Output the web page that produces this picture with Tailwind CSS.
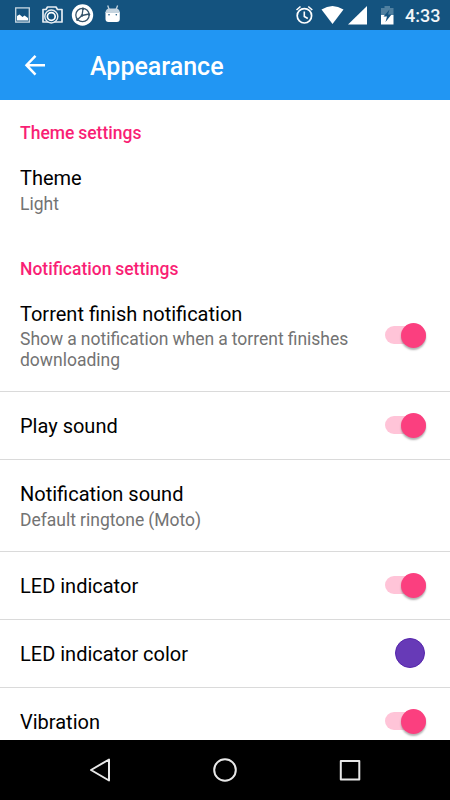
<!DOCTYPE html>
<html lang="en">
<head>
<meta charset="utf-8">
<title>Appearance</title>
<script src="https://cdn.jsdelivr.net/npm/@tailwindcss/browser@4"></script>
</head>
<body class="w-[450px] h-[800px] overflow-hidden bg-white flex flex-col font-['Roboto',sans-serif]">
<div class="h-[30px] shrink-0 bg-[#14537f] flex items-center">
  <svg class="w-[125px] h-[30px]" viewBox="0 0 125 30" fill="none">
    <rect x="15.700" y="7.900" width="13.600" height="14.200" stroke="#c9d9e3" stroke-width="1.300"/>
    <path d="M17 20.500v-4.500l2.500-1.500 3 2.500 2-1.500 3.500 2.500v2.500z" fill="#fff"/>
    <path d="M43 9.500h3l1.500-2.500h8.500l1.500 2.500h4.500v12.500h-19z" stroke="#e6edf3" stroke-width="1.700" stroke-linejoin="round"/>
    <circle cx="51.300" cy="16.500" r="6.500" fill="#14537f" stroke="#e6edf3" stroke-width="1.400"/>
    <circle cx="51.300" cy="16.500" r="3.900" stroke="#fff" stroke-width="1.700"/>
    <circle cx="82.500" cy="15" r="10.700" fill="#fff"/>
    <circle cx="82.500" cy="15" r="6.700" stroke="#35546b" stroke-width="1.300"/>
    <path d="M82 15.500l1-6.500M82 15.500l7-1.500M82 15.500l-5 4.500" stroke="#35546b" stroke-width="1.300"/>
    <circle cx="82" cy="15.500" r="1.300" fill="#35546b"/><circle cx="83" cy="8.800" r="1.200" fill="#35546b"/><circle cx="89" cy="14.500" r="1.200" fill="#35546b"/><circle cx="77.300" cy="19.800" r="1.200" fill="#35546b"/>
    <path d="M105.500 12h14.300v7q0 3-3 3h-8.300q-3 0-3-3z" fill="#fff"/>
    <path d="M105.500 13q0-4.500 4-4.500h6.300q4 0 4 4.500z" fill="#c5d4df"/>
    <path d="M107.700 5.500l1.500 4M117.600 5.500l-1.500 4" stroke="#c5d4df" stroke-width="1.300"/>
    <circle cx="109" cy="14.800" r=".8" fill="#14537f"/><circle cx="116.300" cy="14.800" r=".8" fill="#14537f"/>
  </svg>
  <svg class="w-[115px] h-[30px] ml-auto" viewBox="290 0 115 30" fill="none">
    <circle cx="304.400" cy="15.800" r="7.200" stroke="#fff" stroke-width="1.700"/>
    <path d="M304.300 11.500v5l3.500 2M296.500 10l4-3.500M312.300 10l-4-3.500" stroke="#fff" stroke-width="1.600"/>
    <path d="M321.500 9.500q11-7 22 0L332.500 24z" fill="#fff"/>
    <path d="M348 24.500L367 6v18.500z" fill="#fff"/>
    <path d="M381 8h3.500v-2h5.500v2h3.500v7h-12.500z" fill="#5080a0"/>
    <path d="M381 15h12.500v9.500h-12.500z" fill="#fff"/>
    <path d="M389.500 9.500l-6 7h3.500l-1.500 5.500 6-7.500h-3.500z" fill="#14537f"/>
  </svg>
  <div class="w-[45px] mt-0.5 text-[18px] leading-[22px] font-medium text-[#f1f5f8]">4:33</div>
</div>
<header class="h-[70px] shrink-0 bg-[#2196f3] flex items-center">
  <svg class="w-[90px] h-[70px]" viewBox="0 0 90 70" fill="none" stroke="#fff" stroke-width="2.500"><path d="M45 35.200H27M35.500 25.800l-9 9.400 9 9.400"/></svg>
  <h1 class="text-[25px] leading-[30px] mt-[3px] font-medium text-white">Appearance</h1>
</header>
<main class="flex-1 overflow-hidden text-[20px] leading-[24px] text-black">
  <h2 class="h-[45px] pt-[23px] pl-5 text-[17.500px] leading-[21px] [word-spacing:-0.5px] font-medium text-[#f91f75]">Theme settings</h2>
  <div class="h-[91px] pl-5 pt-[21px]">
    <div>Theme</div><div class="text-[17.500px] leading-[20.500px] mt-1 text-[#737373]">Light</div>
  </div>
  <h2 class="h-[45px] pt-[22.500px] pl-5 text-[17.500px] leading-[21px] [word-spacing:-0.5px] font-medium text-[#f91f75]">Notification settings</h2>
  <div class="h-[111px] flex items-center border-b border-[#dadada] pl-5 pr-6">
    <div class="flex-1"><div>Torrent finish notification</div><div class="text-[17.500px] leading-[20.500px] [word-spacing:-0.3px] mt-[3px] text-[#737373]">Show a notification when a torrent finishes<br>downloading</div></div>
    <div class="relative mb-0.5 w-[41px] h-[18px] rounded-full bg-[#ffc4d8]"><div class="absolute right-0 -top-[3px] size-[25px] rounded-full bg-[#fb3f7f] shadow-[0_2px_2px_rgba(0,0,0,0.3)]"></div></div>
  </div>
  <div class="h-[68px] flex items-center border-b border-[#dadada] pl-5 pr-6 pb-0.5">
    <div class="flex-1 pt-0.5">Play sound</div>
    <div class="relative w-[41px] h-[18px] rounded-full bg-[#ffc4d8]"><div class="absolute right-0 -top-[3px] size-[25px] rounded-full bg-[#fb3f7f] shadow-[0_2px_2px_rgba(0,0,0,0.3)]"></div></div>
  </div>
  <div class="h-[92px] border-b border-[#dadada] pl-5 pt-[22px]">
    <div>Notification sound</div><div class="text-[17.500px] leading-[20.500px] [word-spacing:-0.3px] mt-1 text-[#737373]">Default ringtone (Moto)</div>
  </div>
  <div class="h-[68px] flex items-center border-b border-[#dadada] pl-5 pr-6 pb-0.5">
    <div class="flex-1 pt-0.5">LED indicator</div>
    <div class="relative w-[41px] h-[18px] rounded-full bg-[#ffc4d8]"><div class="absolute right-0 -top-[3px] size-[25px] rounded-full bg-[#fb3f7f] shadow-[0_2px_2px_rgba(0,0,0,0.3)]"></div></div>
  </div>
  <div class="h-[68px] flex items-center border-b border-[#dadada] pl-5 pr-[25px] pb-0.5">
    <div class="flex-1 pt-0.5">LED indicator color</div>
    <div class="size-[30px] rounded-full bg-[#673ab7] border border-[#5526ac]"></div>
  </div>
  <div class="h-[68px] flex items-center pl-5 pr-6 pb-[3px]">
    <div class="flex-1 pt-0.5">Vibration</div>
    <div class="relative w-[41px] h-[18px] rounded-full bg-[#ffc4d8]"><div class="absolute right-0 -top-[3px] size-[25px] rounded-full bg-[#fb3f7f] shadow-[0_2px_2px_rgba(0,0,0,0.3)]"></div></div>
  </div>
</main>
<nav class="h-[60px] shrink-0 bg-black flex items-center justify-center">
  <svg class="w-[450px] h-[60px]" viewBox="0 740 450 60" fill="none" stroke="#e8e8e8" stroke-width="2" stroke-linejoin="round">
    <path d="M109 759.500v21L91 770z"/><circle cx="225" cy="770" r="10.800"/><rect x="340.800" y="761" width="18.500" height="18.500"/>
  </svg>
</nav>
</body>
</html>
